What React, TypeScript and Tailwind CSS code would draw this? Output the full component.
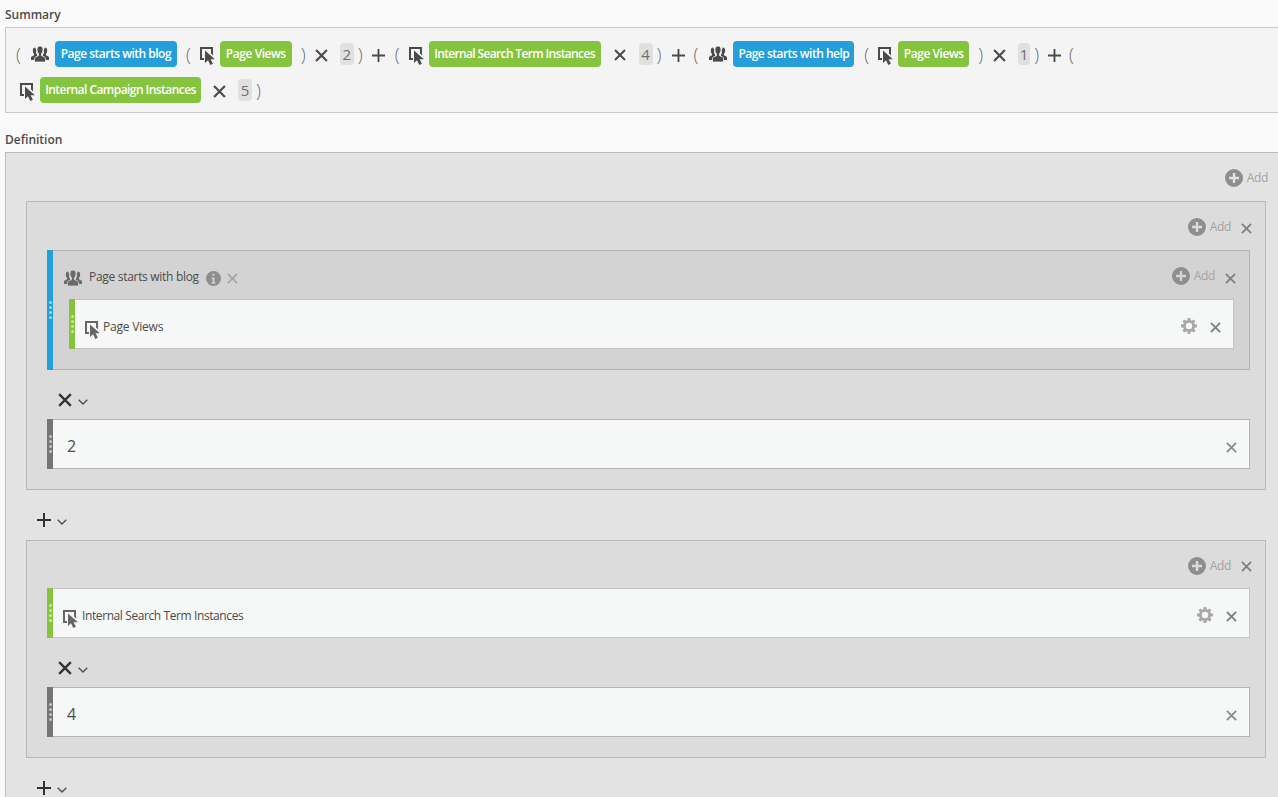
import React from "react";

const F = { fontFamily: '"Open Sans", "Noto Sans", sans-serif' };

function PeopleIcon({ className = "", gap = "#f4f4f4" }: { className?: string; gap?: string }) {
  return (
    <svg viewBox="0 0 18 16" className={className} fill="currentColor">
      <path d="M4.200 1.500C2.700 1.500 1.800 2.700 1.800 4.400c0 1.300.5 2.600 1.200 3.400v1.500L.7 10.400c-.5.200-.7.600-.7 1.100V14h6V8h-.8V4z" />
      <path d="M13.800 1.500c1.500 0 2.400 1.200 2.400 2.900 0 1.300-.5 2.600-1.200 3.400v1.500l2.300 1.100c.5.200.7.600.7 1.100V14h-6V8h.8V4z" />
      <path d="M9 0c1.900 0 3 1.500 3 3.500 0 1.700-.7 3.300-1.500 4.200v1.900l3.100 1.500c.6.300.9.700.9 1.300V16H3.500v-3.600c0-.6.300-1 .9-1.300l3.100-1.500V7.700C6.700 6.800 6 5.200 6 3.500 6 1.500 7.100 0 9 0z" stroke={gap} strokeWidth=".8" />
    </svg>
  );
}

function MetricIcon({ className = "" }: { className?: string }) {
  return (
    <svg viewBox="0 0 15 18" className={className} fill="currentColor">
      <path d="M0 0h13v8.500l-2-2V2H2v9h2v2H0z" />
      <path d="M5 3.500V16l3-2.800 2.300 4.800 2.600-1.200-2.300-4.600h4.300z" />
    </svg>
  );
}

function CloseIcon({ className = "" }: { className?: string }) {
  return (
    <svg viewBox="0 0 12 12" className={className} fill="none" stroke="currentColor" strokeWidth="2">
      <path d="M1 1l10 10M11 1L1 11" />
    </svg>
  );
}

function PlusIcon({ className = "" }: { className?: string }) {
  return (
    <svg viewBox="0 0 14 14" className={className} fill="none" stroke="currentColor" strokeWidth="2">
      <path d="M7 0v14M0 7h14" />
    </svg>
  );
}

function Chevron({ className = "" }: { className?: string }) {
  return (
    <svg viewBox="0 0 10 6" className={`w-[10px] h-[6px] ${className}`} fill="none" stroke="#4b4b4b" strokeWidth="1.300">
      <path d="M.7.7L5 5l4.300-4.300" />
    </svg>
  );
}

function InfoIcon() {
  return (
    <svg viewBox="0 0 16 16" className="w-[15px] h-[15px] text-[#8e8e8e]" fill="currentColor">
      <path fillRule="evenodd" d="M8 0a8 8 0 100 16A8 8 0 008 0zM7 3h2v2H7zM6 7h3v5h1v1.500H6V12h1V8.500H6z" />
    </svg>
  );
}

function Gear() {
  return (
    <svg viewBox="0 0 16 16" className="w-[16px] h-[16px] text-[#a8a8a8] mt-[4px]" fill="currentColor">
      <path fillRule="evenodd" d="M6.700 0h2.600l.4 2.200 1.100.5 1.900-1.300 1.800 1.800-1.300 1.900.5 1.100 2.300.4v2.700l-2.300.4-.5 1.100 1.300 1.900-1.800 1.800-1.900-1.300-1.100.5-.4 2.300H6.700l-.4-2.300-1.100-.5-1.900 1.300-1.800-1.800 1.300-1.900-.5-1.100L0 9.300V6.600l2.300-.4.500-1.100L1.500 3.200l1.800-1.800 1.900 1.300 1.100-.5zM8 4.800a3.200 3.200 0 100 6.400 3.200 3.200 0 000-6.400z" />
    </svg>
  );
}

function Grip({ tone }: { tone: string }) {
  return (
    <div className="flex flex-col gap-[2px]">
      {[0, 1, 2, 3].map((i) => (
        <span key={i} className={`block w-[3px] h-[3px] rounded-full ${tone}`} />
      ))}
    </div>
  );
}

function AddBtn({ close, low }: { close?: boolean; low?: boolean }) {
  return (
    <div className="flex items-center">
      <svg viewBox="0 0 18 18" className="w-[18px] h-[18px] text-[#8e8e8e]" fill="currentColor">
        <path fillRule="evenodd" d="M9 0a9 9 0 100 18A9 9 0 009 0zM7.800 4h2.400v3.800H14v2.400h-3.800V14H7.800v-3.800H4V7.800h3.800z" />
      </svg>
      <span className="ml-[4px] text-[12px] text-[#a3a3a3] tracking-[-0.3px]">Add</span>
      {close && <CloseIcon className={`w-[11px] h-[11px] text-[#808080] ml-[10px] ${low ? "mt-[4px]" : "mt-[2px]"}`} />}
    </div>
  );
}

function Paren({ c, className = "" }: { c: string; className?: string }) {
  return <span className={`text-[18px] leading-none font-light text-[#6e6e6e] ${className}`}>{c}</span>;
}

function Pill({ tone, text, className = "" }: { tone: string; text: string; className?: string }) {
  return (
    <span className={`h-[26px] flex items-center justify-center rounded-[4px] text-white text-[12px] font-semibold ${tone} ${className}`}>
      {text}
    </span>
  );
}

function Chip({ n, className = "" }: { n: string; className?: string }) {
  return (
    <span className={`h-[22px] flex items-center justify-center rounded-[4px] bg-[#e0e0e0] text-[15px] text-[#6e6e6e] ${className}`}>{n}</span>
  );
}

const BLUE = "bg-[#249fd9]";
const GREEN = "bg-[#86c440]";

function MetricRow({ label, textClass }: { label: string; textClass: string }) {
  return (
    <div className="h-[50px] flex items-center border border-[#c4c4c4] bg-[#f6f8f7]">
      <div className={`w-[6px] -ml-px h-[50px] -my-px shrink-0 flex items-center justify-center ${GREEN}`}>
        <Grip tone="bg-[#c6e69e]" />
      </div>
      <MetricIcon className="w-[15px] h-[18px] text-[#666666] mt-[12px] ml-[10px]" />
      <span className={`mt-[6px] text-[12px] text-[#4b4b4b] ${textClass}`}>{label}</span>
      <div className="ml-auto flex items-center mr-[12px] gap-[13px]">
        <Gear />
        <CloseIcon className="w-[11px] h-[11px] text-[#7f7f7f] mt-[6px]" />
      </div>
    </div>
  );
}

function NumberRow({ n }: { n: string }) {
  return (
    <div className="h-[50px] flex items-center border border-[#b4b4b4] bg-[#f6f8f7]">
      <div className="w-[6px] -ml-px h-[50px] -my-px shrink-0 flex items-center justify-center bg-[#777474]">
        <Grip tone="bg-[#c4c4c4]" />
      </div>
      <span className="ml-[14px] mt-[4px] text-[16px] text-[#4b4b4b]">{n}</span>
      <CloseIcon className="w-[11px] h-[11px] text-[#8c8c8c] ml-auto mr-[12px] mt-[6px]" />
    </div>
  );
}

function OpX() {
  return (
    <div className="flex items-center h-[49px] pt-[11px]">
      <CloseIcon className="w-[14px] h-[14px] text-[#323232] ml-[11px]" />
      <Chevron className="ml-[6px] mt-[3px]" />
    </div>
  );
}

function OpPlus() {
  return (
    <div className="flex items-center h-[50px] pt-[10px]">
      <PlusIcon className="w-[14px] h-[14px] text-[#323232] ml-[11px]" />
      <Chevron className="ml-[6px] mt-[3px]" />
    </div>
  );
}

export default function App() {
  return (
    <div style={F} className="w-[1278px] h-[797px] overflow-hidden bg-[#fafafa] text-[#4b4b4b]">
      <div className="pl-[5px] pt-[8px]">
        <h2 className="text-[12px] leading-[14px] font-semibold">Summary</h2>
        <div className="mt-[5px] h-[86px] -mr-px border border-[#cacaca] bg-[#f4f4f4] pt-[13px] pl-[10px]">
          <div className="flex items-center h-[26px]">
            <Paren c="(" />
            <PeopleIcon className="w-[18px] h-[16px] ml-[10px] text-[#4b4b4b]" />
            <Pill tone={BLUE} text="Page starts with blog" className="w-[122px] ml-[6px] tracking-[-0.5px]" />
            <Paren c="(" className="ml-[9px]" />
            <MetricIcon className="w-[15px] h-[18px] ml-[9px] text-[#4b4b4b] mt-[4px]" />
            <Pill tone={GREEN} text="Page Views" className="w-[72px] ml-[5px] tracking-[-0.45px]" />
            <Paren c=")" className="ml-[9px]" />
            <CloseIcon className="w-[13px] h-[13px] ml-[9px] text-[#4b4b4b] mt-[2px]" />
            <Chip n="2" className="w-[14px] ml-[12px]" />
            <Paren c=")" className="ml-[4px]" />
            <PlusIcon className="w-[13px] h-[13px] ml-[9px] text-[#4b4b4b] mt-[2px]" />
            <Paren c="(" className="ml-[10px]" />
            <MetricIcon className="w-[15px] h-[18px] ml-[9px] text-[#4b4b4b] mt-[4px]" />
            <Pill tone={GREEN} text="Internal Search Term Instances" className="w-[172px] ml-[5px] tracking-[-0.65px]" />
            <CloseIcon className="w-[12px] h-[12px] ml-[13px] text-[#4b4b4b] mt-[2px]" />
            <Chip n="4" className="w-[14px] ml-[13px]" />
            <Paren c=")" className="ml-[4px]" />
            <PlusIcon className="w-[13px] h-[13px] ml-[11px] text-[#4b4b4b] mt-[2px]" />
            <Paren c="(" className="ml-[8px]" />
            <PeopleIcon className="w-[18px] h-[16px] ml-[11px] text-[#4b4b4b]" />
            <Pill tone={BLUE} text="Page starts with help" className="w-[121px] ml-[6px] tracking-[-0.5px]" />
            <Paren c="(" className="ml-[10px]" />
            <MetricIcon className="w-[15px] h-[18px] ml-[9px] text-[#4b4b4b] mt-[4px]" />
            <Pill tone={GREEN} text="Page Views" className="w-[71px] ml-[5px] tracking-[-0.45px]" />
            <Paren c=")" className="ml-[9px]" />
            <CloseIcon className="w-[13px] h-[13px] ml-[10px] text-[#4b4b4b] mt-[2px]" />
            <Chip n="1" className="w-[12px] ml-[12px]" />
            <Paren c=")" className="ml-[4px]" />
            <PlusIcon className="w-[13px] h-[13px] ml-[9px] text-[#4b4b4b] mt-[2px]" />
            <Paren c="(" className="ml-[8px]" />
          </div>
          <div className="flex items-center h-[26px] mt-[10px] pl-[4px]">
            <MetricIcon className="w-[15px] h-[18px] text-[#4b4b4b] mt-[4px]" />
            <Pill tone={GREEN} text="Internal Campaign Instances" className="w-[161px] ml-[5px] tracking-[-0.55px]" />
            <CloseIcon className="w-[13px] h-[13px] ml-[12px] text-[#4b4b4b] mt-[2px]" />
            <Chip n="5" className="w-[14px] ml-[12px]" />
            <Paren c=")" className="ml-[4px]" />
          </div>
        </div>

        <h2 className="mt-[20px] text-[12px] leading-[14px] font-semibold">Definition</h2>
        <div className="mt-[5px] -mr-px border border-[#bcbcbc] bg-[#e3e3e3] pl-[20px] pr-[12px] h-[700px]">
          <div className="h-[48px] flex items-center justify-end">
            <div className="mr-[-2px] mt-[2px]"><AddBtn /></div>
          </div>
          <div className="border border-[#b9b9b9] bg-[#dcdcdc] pl-[20px] pr-[15px]">
            <div className="h-[48px] flex items-center justify-end">
              <div className="mr-[-2px] mt-[2px]"><AddBtn close /></div>
            </div>
            <div className="border border-[#b4b4b4] bg-[#d3d3d3] flex">
              <div className={`w-[6px] -ml-px -my-px shrink-0 flex items-center justify-center ${BLUE}`}>
                <Grip tone="bg-[#9fd6f0]" />
              </div>
              <div className="flex-1 pl-[16px] pr-[15px] pb-[20px]">
                <div className="h-[48px] flex items-center">
                  <PeopleIcon className="w-[18px] h-[16px] ml-[-5px] mt-[6px] text-[#6a6a6a]" gap="#d3d3d3" />
                  <span className="ml-[7px] mt-[4px] text-[12px] text-[#4b4b4b] tracking-[-0.3px]">Page starts with blog</span>
                  <span className="ml-[7px] mt-[6px] flex"><InfoIcon /></span>
                  <CloseIcon className="w-[11px] h-[11px] text-[#a6a6a6] ml-[6px] mt-[6px]" />
                  <div className="ml-auto mr-[-2px] mt-[2px]"><AddBtn close low /></div>
                </div>
                <MetricRow label="Page Views" textClass="ml-[3px] tracking-[-0.2px]" />
              </div>
            </div>
            <OpX />
            <NumberRow n="2" />
            <div className="h-[20px]" />
          </div>
          <OpPlus />
          <div className="border border-[#b9b9b9] bg-[#dcdcdc] pl-[20px] pr-[15px]">
            <div className="h-[47px] flex items-center justify-end">
              <div className="mr-[-2px] mt-[2px]"><AddBtn close /></div>
            </div>
            <MetricRow label="Internal Search Term Instances" textClass="ml-[4px] tracking-[-0.4px]" />
            <OpX />
            <NumberRow n="4" />
            <div className="h-[20px]" />
          </div>
          <OpPlus />
        </div>
      </div>
    </div>
  );
}
